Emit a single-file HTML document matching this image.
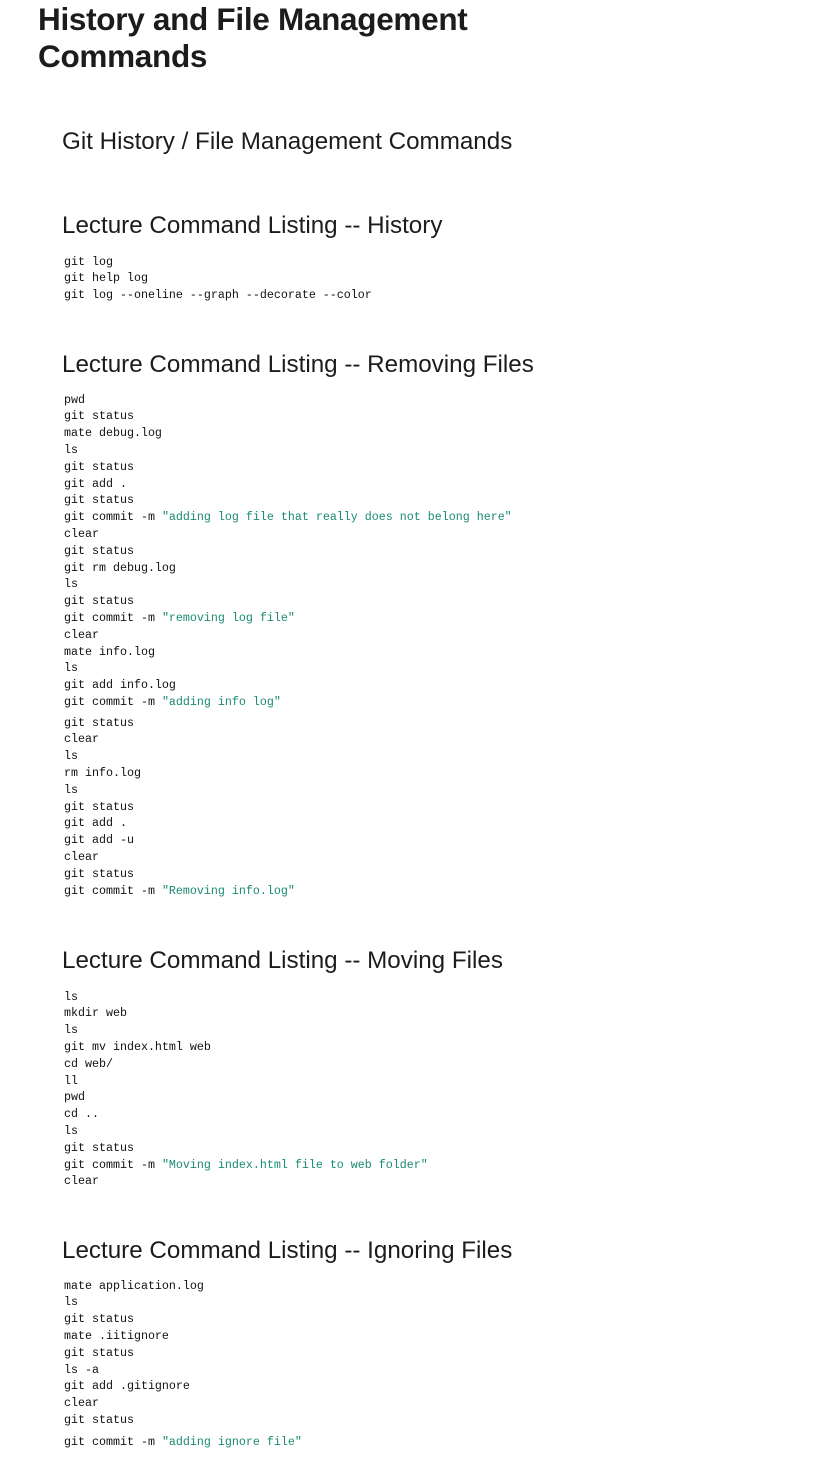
<!DOCTYPE html>
<html><head><meta charset="utf-8"><style>
html,body{margin:0;padding:0;background:#fff;width:829px;height:1473px;overflow:hidden;position:relative;color:#1c1c1c}
h1{position:absolute;left:38px;top:1px;margin:0;font:bold 31.5px/37px "Liberation Sans",sans-serif;letter-spacing:-0.3px}
.h{position:absolute;left:62px;margin:0;font:24.2px/30px "Liberation Sans",sans-serif;white-space:nowrap}
pre{position:absolute;left:64px;margin:0;font:11.67px/16.8px "Liberation Mono",monospace;color:#111}
.s{color:#1a8a73}
</style></head><body>
<h1>History and File Management<br>Commands</h1>
<div class="h" style="top:127px">Git History / File Management Commands</div>
<div class="h" style="top:211px">Lecture Command Listing -- History</div>
<pre style="top:253.6px">git log
git help log
git log --oneline --graph --decorate --color</pre>
<div class="h" style="top:350px">Lecture Command Listing -- Removing Files</div>
<pre style="top:391.6px">pwd
git status
mate debug.log
ls
git status
git add .
git status
git commit -m <span class="s">"adding log file that really does not belong here"</span>
clear
git status
git rm debug.log
ls
git status
git commit -m <span class="s">"removing log file"</span>
clear
mate info.log
ls
git add info.log
git commit -m <span class="s">"adding info log"</span></pre>
<pre style="top:714.6px">git status
clear
ls
rm info.log
ls
git status
git add .
git add -u
clear
git status
git commit -m <span class="s">"Removing info.log"</span></pre>
<div class="h" style="top:946px">Lecture Command Listing -- Moving Files</div>
<pre style="top:988.6px">ls
mkdir web
ls
git mv index.html web
cd web/
ll
pwd
cd ..
ls
git status
git commit -m <span class="s">"Moving index.html file to web folder"</span>
clear</pre>
<div class="h" style="top:1236px">Lecture Command Listing -- Ignoring Files</div>
<pre style="top:1277.6px">mate application.log
ls
git status
mate .iitignore
git status
ls -a
git add .gitignore
clear
git status</pre>
<pre style="top:1433.6px">git commit -m <span class="s">"adding ignore file"</span></pre>
</body></html>
